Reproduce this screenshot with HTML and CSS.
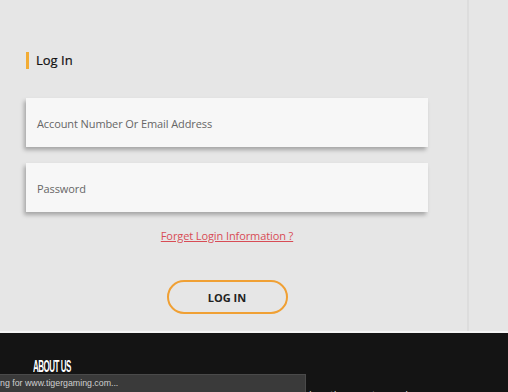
FILE: index.html
```html
<!DOCTYPE html>
<html>
<head>
<meta charset="utf-8">
<link rel="stylesheet" href="styles.css">
</head>
<body>
<div class="page">
  <main class="main">
    <h2 class="title">Log In</h2>
    <form class="form">
      <div class="field">Account Number Or Email Address</div>
      <div class="field">Password</div>
      <a class="forgot" href="#">Forget Login Information ?</a>
      <button type="button" class="login">LOG IN</button>
    </form>
  </main>
  <aside class="side"></aside>
</div>
<footer class="footer">
  <h3 class="about">ABOUT US</h3>
  <p class="about-text">Tiger Gaming is an online poker and casino site and it has the most popular games</p>
</footer>
<div class="status">ng for www.tigergaming.com...</div>
</body>
</html>
```
FILE: styles.css
```css
html, body {
  margin: 0;
  padding: 0;
  background: #e6e6e6;
  width: 508px;
  height: 392px;
  overflow: hidden;
  font-family: "Open Sans", "Noto Sans", sans-serif;
}
.page {
  display: flex;
  height: 331px;
}
.main {
  width: 441px;
  padding-left: 26px;
  border-right: 2px solid #dddddd;
}
.side {
  flex: 1;
}
.title {
  margin: 52px 0 0;
  height: 17px;
  border-left: 3px solid #f2ac35;
  padding-left: 7px;
  font-size: 13px;
  font-weight: 400;
  line-height: 17px;
  color: #111;
  -webkit-text-stroke: 0.2px #111;
}
.form {
  width: 402px;
  margin-top: 29px;
  display: flex;
  flex-direction: column;
  align-items: center;
}
.field {
  align-self: stretch;
  height: 49px;
  background: #f7f7f7;
  box-shadow: -2px 3px 4px rgba(0, 0, 0, 0.28);
  padding-left: 11px;
  font-size: 11px;
  letter-spacing: -0.1px;
  line-height: 52px;
  color: #666;
  margin-bottom: 16px;
}
.forgot {
  font-size: 11px;
  letter-spacing: -0.1px;
  line-height: 16px;
  color: #d84c55;
  text-decoration: underline;
}
.login {
  margin-top: 36px;
  width: 121px;
  height: 34px;
  border: 2px solid #f0a034;
  border-radius: 17px;
  background: transparent;
  font-family: "Open Sans", "Noto Sans", sans-serif;
  font-weight: 700;
  font-size: 11px;
  color: #222;
  padding: 0;
}
.footer {
  border-top: 2px solid #f4f4f4;
  background: #141414;
  height: 61px;
  padding-left: 33px;
  color: #fff;
}
.about {
  display: inline-block;
  margin: 27px 0 0;
  font-family: "Liberation Sans", sans-serif;
  font-weight: 700;
  font-size: 16px;
  line-height: 14px;
  letter-spacing: -1px;
  transform: scaleX(0.5);
  transform-origin: left;
}
.about-text {
  margin: 10px 0 0;
  font-size: 11px;
  white-space: nowrap;
  color: #ddd;
}
.status {
  position: absolute;
  left: 0;
  bottom: 0;
  width: 305px;
  height: 17px;
  background: #3a3a3a;
  border-top: 1px solid #4a4a4a;
  border-right: 1px solid #4a4a4a;
  color: #cfcfcf;
  font-family: "Liberation Sans", sans-serif;
  font-size: 8.8px;
  line-height: 17px;
  white-space: nowrap;
  overflow: hidden;
}
```
